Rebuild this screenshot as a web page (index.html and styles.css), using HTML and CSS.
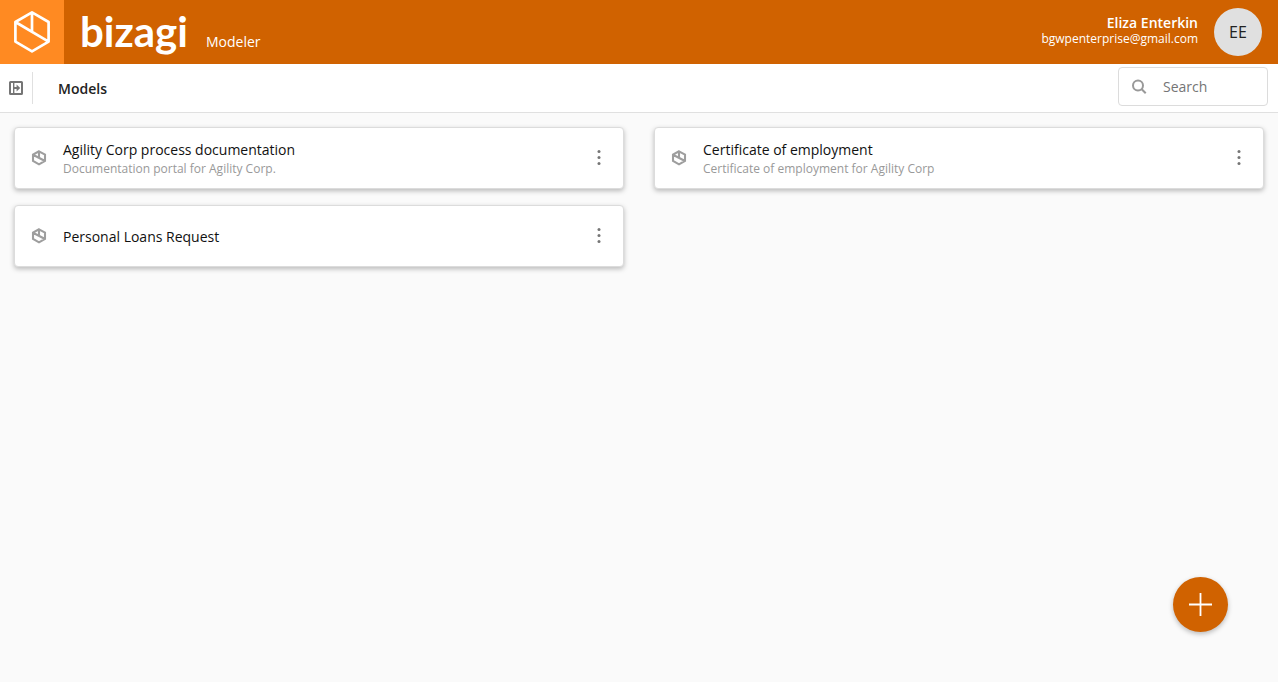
FILE: index.html
```html
<!DOCTYPE html>
<html lang="en">
<head>
<meta charset="utf-8">
<meta name="viewport" content="width=device-width, initial-scale=1">
<title>Bizagi Modeler</title>
<link rel="stylesheet" href="styles.css">
</head>
<body>
<svg class="symbols" aria-hidden="true">
  <symbol id="cube" viewBox="0 0 16 16"><path d="M8 1.3 14 4.6v6.4L8 14.4 2 11V4.6zM2 4.8l12 6.2M8 1.5v6.2" fill="none" stroke="currentColor" stroke-width="2.1"/></symbol>
  <symbol id="dots" viewBox="0 0 4 16"><g fill="currentColor"><circle cx="2" cy="1.5" r="1.5"/><circle cx="2" cy="7.5" r="1.5"/><circle cx="2" cy="13.5" r="1.5"/></g></symbol>
</svg>
<header class="topbar">
  <div class="app-tile">
    <svg width="38" height="44" viewBox="0 0 38 44" aria-hidden="true"><path d="M19 2.3 35.6 12v19.6L19 41.3 2.4 31.6V12zM2.4 12l33.2 19.6M19 2.3V22" fill="none" stroke="currentColor" stroke-width="2.7" stroke-linejoin="round"/></svg>
  </div>
  <div class="brand">
    <span class="wordmark">bizagi</span>
    <span class="product">Modeler</span>
  </div>
  <div class="user">
    <span class="user-name">Eliza Enterkin</span>
    <span class="user-mail">bgwpenterprise@gmail.com</span>
  </div>
  <button class="avatar" type="button">EE</button>
</header>
<div class="toolbar">
  <button class="panel-toggle" type="button" aria-label="Expand panel">
    <svg width="14" height="14" viewBox="0 0 14 14" aria-hidden="true"><rect x="1" y="1" width="12" height="12" rx=".5" fill="none" stroke="currentColor" stroke-width="2"/><path d="M4.7 1v12" stroke="currentColor" stroke-width="1.4"/><path d="M5 6h2.6V3.5L11.2 7l-3.6 3.5V8H5z" fill="currentColor"/></svg>
  </button>
  <h1 class="title">Models</h1>
  <label class="search">
    <svg width="16" height="16" viewBox="0 0 16 16" aria-hidden="true"><g fill="none" stroke="currentColor" stroke-width="2"><circle cx="7" cy="6.5" r="5"/><path d="m10.7 10.2 4 4"/></g></svg>
    <input class="search-input" type="text" placeholder="Search" aria-label="Search">
  </label>
</div>
<main class="models">
  <article class="card">
    <svg class="card-icon" aria-hidden="true"><use href="#cube"/></svg>
    <div class="card-text"><h2 class="card-name">Agility Corp process documentation</h2><p class="card-note">Documentation portal for Agility Corp.</p></div>
    <button class="more" type="button" aria-label="More options"><svg class="more-icon" aria-hidden="true"><use href="#dots"/></svg></button>
  </article>
  <article class="card">
    <svg class="card-icon" aria-hidden="true"><use href="#cube"/></svg>
    <div class="card-text"><h2 class="card-name">Certificate of employment</h2><p class="card-note">Certificate of employment for Agility Corp</p></div>
    <button class="more" type="button" aria-label="More options"><svg class="more-icon" aria-hidden="true"><use href="#dots"/></svg></button>
  </article>
  <article class="card">
    <svg class="card-icon" aria-hidden="true"><use href="#cube"/></svg>
    <div class="card-text"><h2 class="card-name">Personal Loans Request</h2></div>
    <button class="more" type="button" aria-label="More options"><svg class="more-icon" aria-hidden="true"><use href="#dots"/></svg></button>
  </article>
</main>
<button class="add" type="button" aria-label="Add model">
  <svg width="23" height="23" viewBox="0 0 23 23" aria-hidden="true"><path d="M11.5 0v23M0 11.5h23" stroke="currentColor" stroke-width="1.8"/></svg>
</button>
</body>
</html>
```
FILE: styles.css
```css
* { box-sizing: border-box; }
body {
  margin: 0;
  background: #fafafa;
  color: #111;
  font: 14px/20px "Open Sans", "Noto Sans", sans-serif;
}
h1, h2, p { margin: 0; }
button { padding: 0; border: 0; background: none; font: inherit; cursor: pointer; }
.symbols { position: absolute; width: 0; height: 0; }

.topbar {
  display: flex;
  align-items: center;
  height: 64px;
  padding-right: 16px;
  background: #d06200;
  color: #fff;
}
.app-tile {
  display: grid;
  place-items: center;
  width: 64px;
  height: 64px;
  background: #ff8a22;
}
.brand {
  display: flex;
  align-items: baseline;
  gap: 18px;
  padding: 0 0 2px 16px;
}
.wordmark { font: bold 42px/56px Lato, sans-serif; }
.user {
  display: flex;
  flex-direction: column;
  align-items: flex-end;
  margin-left: auto;
  padding: 0 16px 2px 0;
  line-height: 16px;
}
.user-name { font-weight: 600; }
.user-mail { font-size: 12px; }
.avatar {
  width: 48px;
  height: 48px;
  border-radius: 50%;
  background: #e0e0e0;
  color: #222;
  font-size: 16px;
  font-weight: 500;
}

.toolbar {
  display: flex;
  align-items: center;
  height: 49px;
  padding-right: 10px;
  border-bottom: 1px solid #e0e0e0;
  background: #fff;
}
.panel-toggle {
  display: grid;
  place-items: center;
  width: 33px;
  height: 32px;
  border-right: 1px solid #e0e0e0;
  color: #757575;
}
.title {
  padding: 2px 0 0 25px;
  color: #222;
  font-size: 14px;
  font-weight: 600;
}
.search {
  display: flex;
  align-items: center;
  gap: 16px;
  width: 150px;
  height: 39px;
  margin: 0 0 3px auto;
  padding: 0 12px;
  border: 1px solid #dcdcdc;
  border-radius: 4px;
  color: #999;
}
.search svg { flex: none; }
.search-input {
  flex: 1;
  min-width: 0;
  padding: 0;
  border: 0;
  outline: 0;
  background: none;
  color: #333;
  font: inherit;
}
.search-input::placeholder { color: #757575; }

.models {
  display: grid;
  grid-template-columns: 1fr 1fr;
  gap: 16px 30px;
  padding: 14px;
}
.card {
  display: flex;
  align-items: center;
  min-height: 62px;
  padding: 0 16px;
  border: 1px solid #dcdcdc;
  border-radius: 4px;
  background: #fff;
  box-shadow: 0 2px 5px rgba(0, 0, 0, .26);
}
.card-icon { width: 16px; height: 16px; color: #9e9e9e; }
.card-text { flex: 1; padding: 2px 16px 0; }
.card-name { font-size: 14px; font-weight: 400; }
.card-note { color: #999; font-size: 12px; line-height: 18px; }
.more { display: grid; place-items: center; width: 16px; height: 32px; color: #757575; }
.more-icon { width: 4px; height: 16px; }

.add {
  position: fixed;
  right: 50px;
  bottom: 50px;
  display: grid;
  place-items: center;
  width: 55px;
  height: 55px;
  border-radius: 50%;
  background: #d06200;
  color: #fff;
  box-shadow: 0 2px 5px rgba(0, 0, 0, .26);
}
```
